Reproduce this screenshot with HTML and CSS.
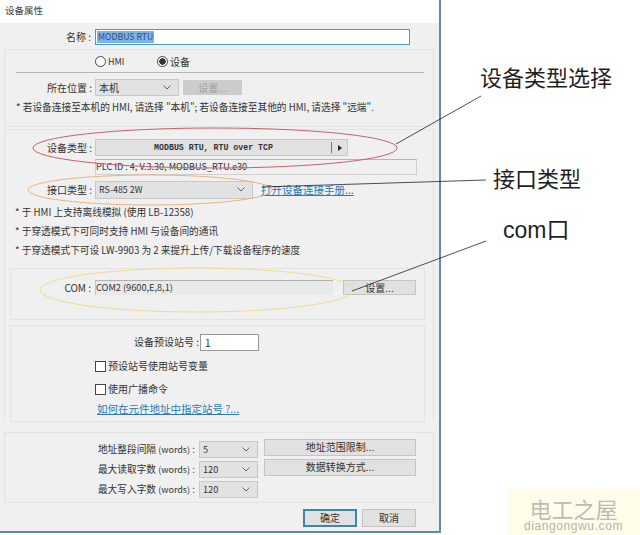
FILE: index.html
```html
<!DOCTYPE html>
<html lang="zh">
<head>
<meta charset="utf-8">
<title>设备属性</title>
<link rel="stylesheet" href="styles.css">
</head>
<body>
<div class="page">
  <div class="dialog">
    <div class="titlebar">设备属性</div>
    <div class="content">
      <div class="row name-row">
        <span class="label w87">名称 :</span>
        <span class="name-input"><span class="selected">MODBUS RTU</span></span>
      </div>

      <div class="group group-a">
        <div class="radios">
          <span class="radio"><i class="radio-dot"></i><span class="latin">HMI</span></span>
          <span class="radio radio-on"><i class="radio-dot"></i>设备</span>
        </div>
        <div class="sep"></div>
        <div class="row loc-row">
          <span class="label w87">所在位置 :</span>
          <span class="select loc-select">本机<svg class="chev" viewBox="0 0 8 5"><path d="M.5.5 4 4 7.500.5"/></svg></span>
          <span class="btn btn-disabled">设置...</span>
        </div>
        <div class="note note-a">* 若设备连接至本机的 HMI, 请选择 "本机"; 若设备连接至其他的 HMI, 请选择 "远端".</div>
      </div>

      <div class="group group-b">
        <div class="row type-row">
          <span class="label w87">设备类型 :</span>
          <span class="type-btn"><span class="type-text">MODBUS RTU, RTU over TCP</span><span class="type-arrow"><i></i></span></span>
        </div>
        <div class="plc">PLC ID : 4, V.3.30, MODBUS_RTU.e30</div>
        <div class="row port-row">
          <span class="label w87">接口类型 :</span>
          <span class="select port-select">RS-485 2W<svg class="chev" viewBox="0 0 8 5"><path d="M.5.5 4 4 7.500.5"/></svg></span>
          <a class="link port-link">打开设备连接手册...</a>
        </div>
        <div class="note note-b">* 于 HMI 上支持离线模拟 (使用 LB-12358)</div>
        <div class="note note-b">* 于穿透模式下可同时支持 HMI 与设备间的通讯</div>
        <div class="note note-b">* 于穿透模式下可设 LW-9903 为 2 来提升上传/下载设备程序的速度</div>

        <div class="inner com-box">
          <span class="label com-label">COM :</span>
          <span class="com-field">COM2 (9600,E,8,1)</span>
          <span class="btn com-btn">设置...</span>
        </div>

        <div class="inner station-box">
          <div class="row station-row">
            <span class="label station-label">设备预设站号 :</span>
            <span class="station-input">1</span>
          </div>
          <div class="check"><i></i>预设站号使用站号变量</div>
          <div class="check"><i></i>使用广播命令</div>
          <a class="link station-link">如何在元件地址中指定站号 ?...</a>
        </div>
      </div>

      <div class="group group-c">
        <div class="c-labels">
          <div class="c-row"><span class="label">地址整段间隔 <small>(words)</small> :</span><span class="select c-select">5<svg class="chev" viewBox="0 0 8 5"><path d="M.5.5 4 4 7.500.5"/></svg></span></div>
          <div class="c-row"><span class="label">最大读取字数 <small>(words)</small> :</span><span class="select c-select">120<svg class="chev" viewBox="0 0 8 5"><path d="M.5.5 4 4 7.500.5"/></svg></span></div>
          <div class="c-row"><span class="label">最大写入字数 <small>(words)</small> :</span><span class="select c-select">120<svg class="chev" viewBox="0 0 8 5"><path d="M.5.5 4 4 7.500.5"/></svg></span></div>
        </div>
        <div class="c-btns">
          <span class="btn c-btn">地址范围限制...</span>
          <span class="btn c-btn">数据转换方式...</span>
        </div>
      </div>

      <div class="actions">
        <span class="btn action action-default">确定</span>
        <span class="btn action">取消</span>
      </div>
    </div>
  </div>

  <svg class="marks" viewBox="0 0 640 535">
    <ellipse class="m-red" cx="215" cy="148" rx="182" ry="20"/>
    <ellipse class="m-orange" cx="150" cy="190" rx="122" ry="15"/>
    <ellipse class="m-yellow" cx="197" cy="290" rx="157" ry="22"/>
    <path class="m-line" d="M396 144 481 96M262 187 486 180M352 291 486 241"/>
  </svg>

  <span class="callout callout-1">设备类型选择</span>
  <span class="callout callout-2">接口类型</span>
  <span class="callout callout-3">com口</span>

  <div class="watermark">
    <div class="wm-cn">电工之屋</div>
    <div class="wm-en">diangongwu.com</div>
  </div>
</div>
</body>
</html>
```

FILE: styles.css
```css
* { box-sizing: border-box; }
html, body { margin: 0; padding: 0; background: #fff; }
body {
  font-family: "Noto Sans CJK SC", "Liberation Sans", sans-serif;
  font-size: 10px;
  line-height: 16px;
  color: #333;
}
.page { position: relative; width: 640px; height: 535px; overflow: hidden; }
.dialog {
  width: 441px;
  height: 533px;
  border-right: 2px solid #5d8ea6;
  border-bottom: 2px solid #5d8ea6;
  background: #f0f0f0;
}
.titlebar { height: 23px; background: #fff; padding: 2px 0 0 5px; font-size: 9.500px; color: #444; }
.content { padding: 6px 0 0 4px; }
.row { display: flex; align-items: center; }
.label { color: #333; white-space: nowrap; }
.w87 { width: 87px; text-align: right; flex: none; }
small { font-size: 9px; }
.latin { font-size: 9px; }

.name-row { height: 16px; }
.name-input {
  margin-left: 4px;
  width: 315px;
  height: 16px;
  background: #fff;
  border: 1px solid #3f9fd2;
  padding: 1px 0 0 1px;
  line-height: 12px;
  font-size: 8.700px;
}
.selected { display: inline-block; background: #7fb2e5; color: #2f4f78; height: 12px; padding: 0 1px; }

.group { border: 1px solid #e3e3e3; width: 430px; }
.group-a { margin-top: 4px; height: 78px; padding-top: 1px; }
.radios { display: flex; height: 21px; padding-left: 90px; align-items: center; }
.radio { display: flex; align-items: center; gap: 2px; width: 62px; }
.radio-dot {
  width: 11px; height: 11px; border: 1px solid #444; border-radius: 50%; background: #fff; display: block; flex: none;
}
.radio-on .radio-dot { background: radial-gradient(circle, #333 0 3px, #fff 3.500px); }
.sep { height: 1px; background: #b5b5b5; margin-left: 11px; width: 408px; }
.loc-row { margin-top: 6px; height: 17px; }
.select {
  position: relative;
  display: block;
  height: 17px;
  background: #e2e2e2;
  border: 1px solid #c8c8c8;
  padding-left: 3px;
  line-height: 15px;
  flex: none;
}
.chev { position: absolute; right: 7px; top: 5px; width: 8px; height: 5px; fill: none; stroke: #666; stroke-width: 1; }
.loc-select { width: 84px; margin-left: 3px; }
.btn {
  display: block;
  text-align: center;
  background: #e1e1e1;
  border: 1px solid #c4c4c4;
  color: #333;
  flex: none;
}
.btn-disabled { width: 59px; height: 15px; margin-left: 4px; background: #ccc; border-color: #ccc; color: #a0a0a0; line-height: 13px; }
.note { white-space: nowrap; color: #333; }
.note-a { margin: 3px 0 0 11px; font-size: 9.700px; }

.group-b { margin-top: 2px; height: 292px; border-bottom: 0; padding-top: 9px; }
.type-row { height: 17px; }
.type-btn {
  display: flex;
  margin-left: 3px;
  width: 253px;
  height: 17px;
  background: #e1e1e1;
  border: 1px solid #c8c8c8;
  flex: none;
}
.type-text {
  flex: 1;
  text-align: center;
  font-family: "Liberation Mono", monospace;
  font-size: 8.250px;
  font-weight: 700;
  line-height: 15px;
  color: #333;
}
.type-arrow { width: 16px; border-left: 1px solid #777; margin: 2px 0; display: flex; align-items: center; justify-content: center; }
.type-arrow i { border-left: 4px solid #222; border-top: 3px solid transparent; border-bottom: 3px solid transparent; }
.plc {
  margin: 3px 0 0 90px;
  width: 322px;
  height: 16px;
  background: #f0f0f0;
  border: 1px solid #d0d0d0;
  border-top-color: #b5b5b5;
  font-size: 9.100px;
  line-height: 12px;
  white-space: nowrap;
}
.port-row { margin-top: 6px; height: 18px; }
.port-select { width: 158px; height: 18px; margin-left: 3px; font-size: 8.900px; }
.link { color: #2a7ab8; text-decoration: underline; white-space: nowrap; font-size: 10.500px; }
.port-link { margin-left: 8px; }
.note-b { margin: 5px 0 0 10px; height: 16px; font-size: 9.700px; }
.note-b + .note-b { margin-top: 3px; }

.inner { margin-left: 5px; width: 415px; border: 1px solid #e3e3e3; }
.com-box { margin-top: 10px; height: 52px; display: flex; align-items: flex-start; padding-top: 11px; }
.com-label { width: 80px; text-align: right; flex: none; line-height: 15px; }
.com-field {
  margin-left: 4px;
  width: 238px;
  height: 15px;
  background: #e9e9e9;
  border-top: 1px solid #b0b0b0;
  border-left: 1px solid #c5c5c5;
  line-height: 13px;
  font-size: 9.200px;
  flex: none;
}
.com-btn { margin-left: 10px; width: 73px; height: 15px; line-height: 13px; }

.station-box { margin-top: 5px; height: 97px; padding-top: 8px; }
.station-row { height: 16px; }
.station-label { width: 188px; text-align: right; flex: none; }
.station-input {
  width: 59px;
  height: 17px;
  margin-left: 1px;
  background: #fff;
  border: 1px solid #999;
  padding-left: 4px;
  line-height: 15px;
  flex: none;
}
.check { display: flex; align-items: center; gap: 2px; margin: 8px 0 0 84px; height: 16px; }
.check i { display: block; width: 11px; height: 11px; background: #fff; border: 1px solid #444; flex: none; }
.check + .check { margin-top: 7px; }
.station-link { display: block; margin: 4px 0 0 86px; }

.group-c { margin-top: 11px; height: 71px; display: flex; padding-top: 8px; border-top: 1px solid #e3e3e3; }
.c-labels { width: 253px; flex: none; }
.c-row { display: flex; justify-content: flex-end; align-items: center; height: 17px; margin-bottom: 3px; }
.c-row .label { margin-right: 4px; font-size: 9.700px; }
.c-select { width: 59px; font-size: 9.200px; }
.c-btns { margin: -2px 0 0 6px; }
.c-btn { width: 152px; height: 17px; line-height: 14px; margin-bottom: 3px; }

.actions { display: flex; justify-content: flex-end; gap: 5px; margin: 6px 23px 0 0; }
.action { width: 54px; height: 18px; line-height: 16px; }
.action-default { border: 2px solid #3a86ad; line-height: 14px; }

.marks { position: absolute; left: 0; top: 0; width: 640px; height: 535px; fill: none; pointer-events: none; }
.m-red { stroke: #c9606a; stroke-width: 1; }
.m-orange { stroke: #eeb27a; stroke-width: 1; }
.m-yellow { stroke: #efdc8f; stroke-width: 1; }
.m-line { stroke: #222; stroke-width: .8; }

.callout { position: absolute; font-size: 22px; line-height: 30px; color: #1f1f1f; white-space: nowrap; }
.callout-1 { left: 480px; top: 61px; }
.callout-2 { left: 493px; top: 162px; }
.callout-3 { left: 503px; top: 215px; font-size: 23px; font-family: "Liberation Sans", "Noto Sans CJK SC", sans-serif; }

.watermark {
  position: absolute;
  left: 507px;
  top: 489px;
  width: 133px;
  height: 46px;
  background: #fffde9;
  text-align: center;
  padding-top: 7px;
}
.wm-cn { font-size: 22px; line-height: 24px; color: #bcbcb6; }
.wm-en { font-size: 12px; line-height: 12px; color: #b4b4b0; font-family: "Liberation Sans", sans-serif; letter-spacing: .6px; }
```
